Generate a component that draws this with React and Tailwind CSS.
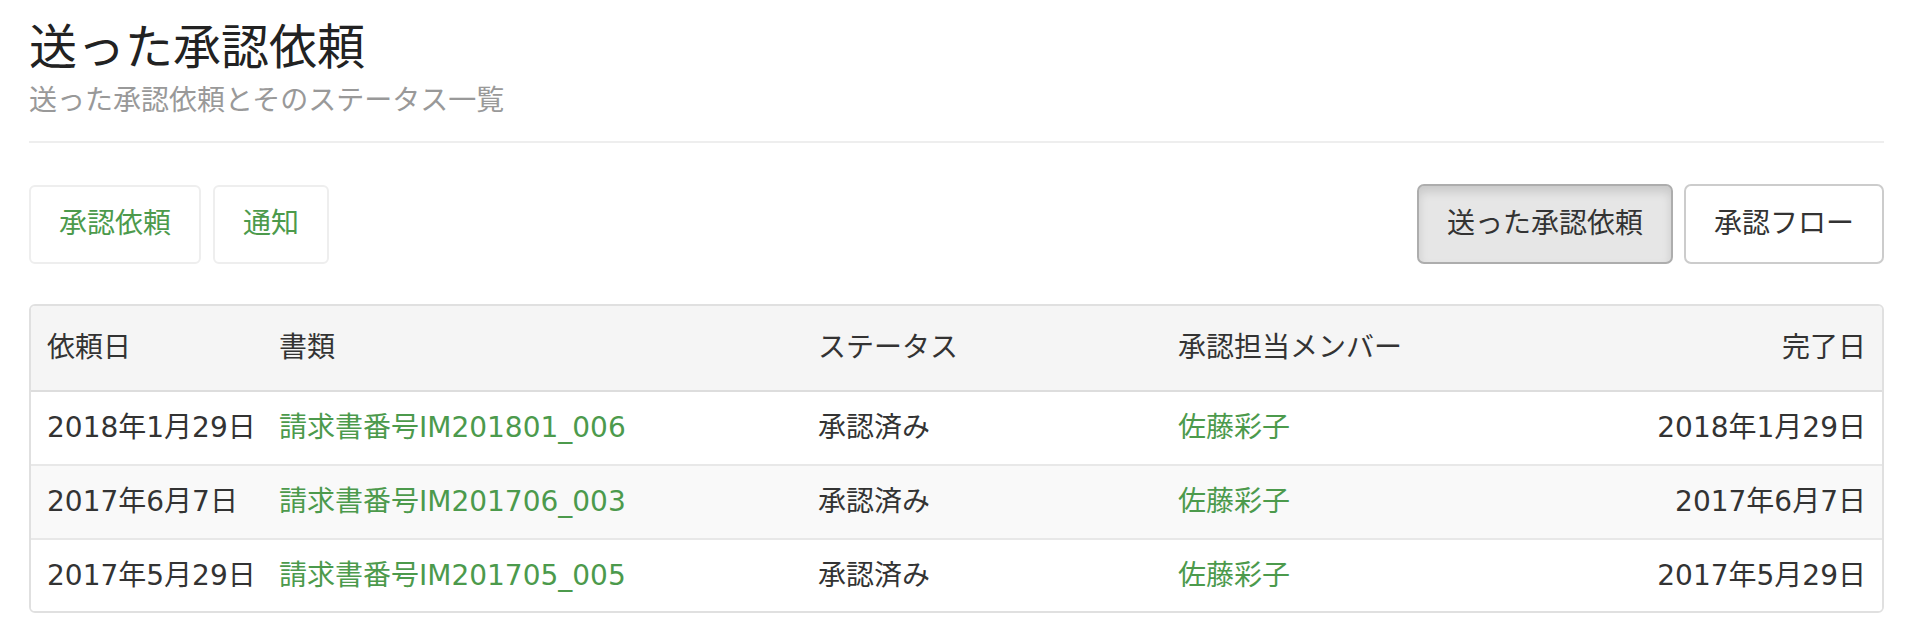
import React from "react";

const rows = [
  { req: "2018年1月29日", doc: "請求書番号IM201801_006", status: "承認済み", member: "佐藤彩子", done: "2018年1月29日", striped: false },
  { req: "2017年6月7日", doc: "請求書番号IM201706_003", status: "承認済み", member: "佐藤彩子", done: "2017年6月7日", striped: true },
  { req: "2017年5月29日", doc: "請求書番号IM201705_005", status: "承認済み", member: "佐藤彩子", done: "2017年5月29日", striped: false },
];

export default function App() {
  return (
    <div className="min-h-[638px] bg-white pl-[29px] pr-[24px] font-['DejaVu_Sans','Noto_Sans_CJK_JP',sans-serif] text-[#333]">
      <div className="pt-[23px]">
        <h1 className="text-[48px] leading-[48px] font-normal text-[#222]">送った承認依頼</h1>
        <p className="mt-[16px] text-[28px] leading-[28px] text-[#999]">送った承認依頼とそのステータス一覧</p>
      </div>
      <div className="mt-[26px] h-[2px] bg-[#eeeeee]" />

      <div className="mt-[41px] flex items-center justify-between">
        <div className="flex gap-[12px]">
          <button className="flex h-[79px] items-center rounded-[6px] border-2 border-[#eeeeee] bg-white px-[28px] text-[28px] leading-[28px] text-[#4c9a4c]">承認依頼</button>
          <button className="flex h-[79px] items-center rounded-[6px] border-2 border-[#eeeeee] bg-white px-[28px] text-[28px] leading-[28px] text-[#4c9a4c]">通知</button>
        </div>
        <div className="flex gap-[11px]">
          <button className="flex h-[80px] items-center rounded-[7px] border-2 border-[#adadad] bg-[#e6e6e6] px-[28px] text-[28px] leading-[28px] text-[#333] shadow-[inset_0_6px_10px_rgba(0,0,0,0.125)]">送った承認依頼</button>
          <button className="flex h-[80px] items-center rounded-[7px] border-2 border-[#cccccc] bg-white px-[28px] text-[28px] leading-[28px] text-[#333]">承認フロー</button>
        </div>
      </div>

      <div className="mt-[40px] overflow-hidden rounded-[6px] border-2 border-[#e0e0e0]">
        <table className="w-full table-fixed border-collapse text-[28px] leading-[28px]">
          <colgroup>
            <col className="w-[232px]" />
            <col className="w-[539px]" />
            <col className="w-[360px]" />
            <col className="w-[400px]" />
            <col />
          </colgroup>
          <thead>
            <tr className="bg-[#f5f5f5]">
              <th className="h-[85px] border-b-2 border-[#dddddd] px-[16px] text-left font-normal">依頼日</th>
              <th className="h-[85px] border-b-2 border-[#dddddd] px-[16px] text-left font-normal">書類</th>
              <th className="h-[85px] border-b-2 border-[#dddddd] px-[16px] text-left font-normal">ステータス</th>
              <th className="h-[85px] border-b-2 border-[#dddddd] px-[16px] text-left font-normal">承認担当メンバー</th>
              <th className="h-[85px] border-b-2 border-[#dddddd] px-[16px] text-right font-normal">完了日</th>
            </tr>
          </thead>
          <tbody>
            {rows.map((r, i) => {
              const last = i === rows.length - 1;
              const h = last ? "h-[72px]" : "h-[74px]";
              return (
                <tr
                  key={i}
                  className={(r.striped ? "bg-[#f9f9f9] " : "bg-white ") + (last ? "" : "border-b-2 border-[#e8e8e8]")}
                >
                  <td className={h + " whitespace-nowrap px-[16px] text-left"}>{r.req}</td>
                  <td className={h + " whitespace-nowrap px-[16px] text-left text-[#4c9a4c]"}>{r.doc}</td>
                  <td className={h + " whitespace-nowrap px-[16px] text-left"}>{r.status}</td>
                  <td className={h + " whitespace-nowrap px-[16px] text-left text-[#4c9a4c]"}>{r.member}</td>
                  <td className={h + " whitespace-nowrap px-[16px] text-right"}>{r.done}</td>
                </tr>
              );
            })}
          </tbody>
        </table>
      </div>
    </div>
  );
}
